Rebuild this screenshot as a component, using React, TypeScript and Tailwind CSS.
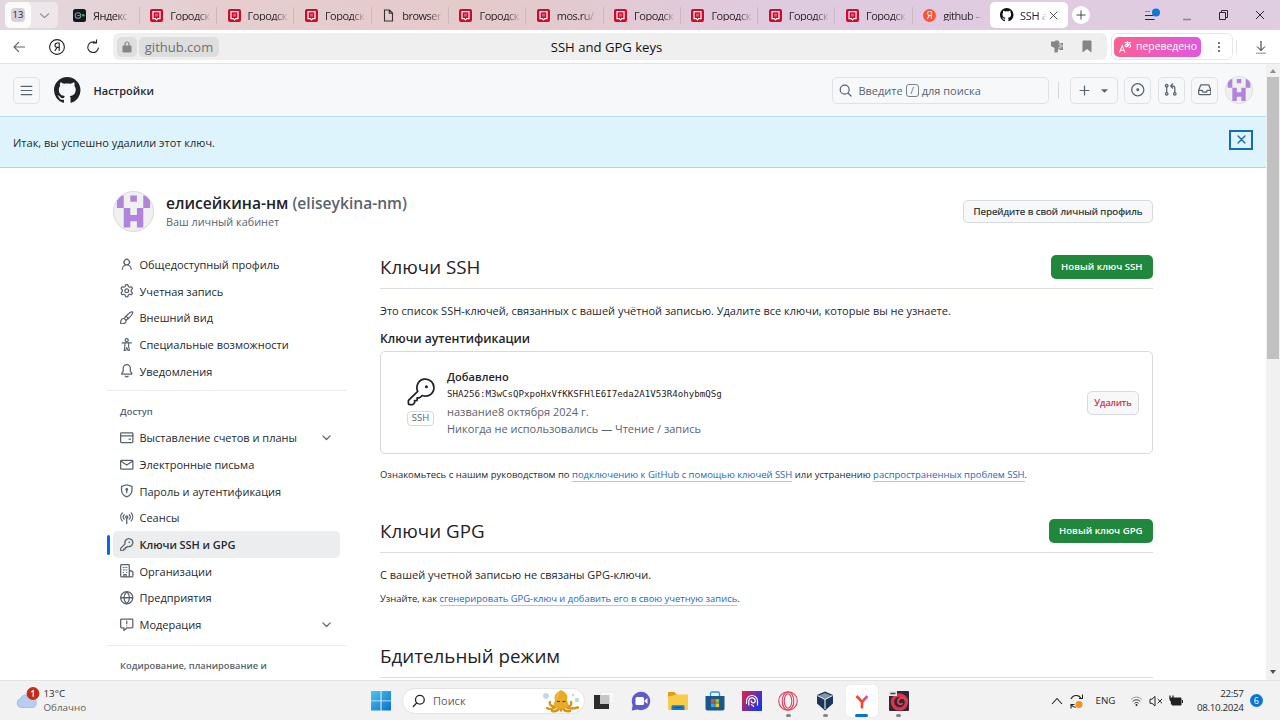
import type { ReactNode } from "react";

const PATHS = {
  github:
    "M8 0c4.42 0 8 3.58 8 8a8.013 8.013 0 0 1-5.45 7.59c-.4.08-.55-.17-.55-.38 0-.27.01-1.13.01-2.2 0-.75-.25-1.23-.54-1.48 1.78-.2 3.65-.88 3.65-3.95 0-.88-.31-1.59-.82-2.15.08-.2.36-1.02-.08-2.12 0 0-.67-.22-2.2.82-.64-.18-1.32-.27-2-.27-.68 0-1.36.09-2 .27-1.53-1.03-2.2-.82-2.2-.82-.44 1.1-.16 1.92-.08 2.12-.51.56-.82 1.28-.82 2.15 0 3.06 1.86 3.75 3.64 3.95-.23.2-.44.55-.51 1.07-.46.21-1.61.55-2.33-.66-.15-.24-.6-.83-1.23-.82-.67.01-.27.38.01.53.34.19.73.9.82 1.13.16.45.68 1.31 2.69.94 0 .67.01 1.3.01 1.49 0 .21-.15.45-.55.38A7.995 7.995 0 0 1 0 8c0-4.42 3.58-8 8-8Z",
  person:
    "M10.561 8.073a6.005 6.005 0 0 1 3.432 5.142.75.75 0 1 1-1.498.07 4.5 4.5 0 0 0-8.99 0 .75.75 0 0 1-1.498-.07 6.004 6.004 0 0 1 3.431-5.142 3.999 3.999 0 1 1 5.123 0ZM10.5 5a2.5 2.5 0 1 0-5 0 2.5 2.5 0 0 0 5 0Z",
  gear: "M8 0a8.2 8.2 0 0 1 .701.031C9.444.095 9.99.645 10.16 1.29l.288 1.107c.018.066.079.158.212.224.231.114.454.243.668.386.123.082.233.09.299.071l1.103-.303c.644-.176 1.392.021 1.82.63.27.385.506.792.704 1.218.315.675.111 1.422-.364 1.891l-.814.806c-.049.048-.098.147-.088.294.016.257.016.515 0 .772-.01.147.038.246.088.294l.814.806c.475.469.679 1.216.364 1.891a7.977 7.977 0 0 1-.704 1.217c-.428.61-1.176.807-1.82.63l-1.102-.302c-.067-.019-.177-.011-.3.071a5.909 5.909 0 0 1-.668.386c-.133.066-.194.158-.211.224l-.29 1.106c-.168.646-.715 1.196-1.458 1.26a8.006 8.006 0 0 1-1.402 0c-.743-.064-1.289-.614-1.458-1.26l-.289-1.106c-.018-.066-.079-.158-.212-.224a5.738 5.738 0 0 1-.668-.386c-.123-.082-.233-.09-.299-.071l-1.103.303c-.644.176-1.392-.021-1.82-.63a8.12 8.12 0 0 1-.704-1.218c-.315-.675-.111-1.422.363-1.891l.815-.806c.05-.048.098-.147.088-.294a6.214 6.214 0 0 1 0-.772c.01-.147-.038-.246-.088-.294l-.815-.806C.635 6.045.431 5.298.746 4.623a7.92 7.92 0 0 1 .704-1.217c.428-.61 1.176-.807 1.82-.63l1.102.302c.067.019.177.011.3-.071.214-.143.437-.272.668-.386.133-.066.194-.158.211-.224l.29-1.106C6.009.645 6.556.095 7.299.03 7.53.01 7.764 0 8 0Zm-.571 1.525c-.036.003-.108.036-.137.146l-.289 1.105c-.147.561-.549.967-.998 1.189-.173.086-.34.183-.5.29-.417.278-.97.423-1.529.27l-1.103-.303c-.109-.03-.175.016-.195.045-.22.312-.412.644-.573.99-.014.031-.021.11.059.19l.815.806c.411.406.562.957.53 1.456a4.709 4.709 0 0 0 0 .582c.032.499-.119 1.05-.53 1.456l-.815.806c-.081.08-.073.159-.059.19.162.346.353.677.573.989.02.03.085.076.195.046l1.102-.303c.56-.153 1.113-.008 1.53.27.161.107.328.204.501.29.447.222.85.629.997 1.189l.289 1.105c.029.109.101.143.137.146a6.6 6.6 0 0 0 1.142 0c.036-.003.108-.036.137-.146l.289-1.105c.147-.561.549-.967.998-1.189.173-.086.34-.183.5-.29.417-.278.97-.423 1.529-.27l1.103.303c.109.029.175-.016.195-.045.22-.313.411-.644.573-.99.014-.031.021-.11-.059-.19l-.815-.806c-.411-.406-.562-.957-.53-1.456a4.709 4.709 0 0 0 0-.582c-.032-.499.119-1.05.53-1.456l.815-.806c.081-.08.073-.159.059-.19a6.464 6.464 0 0 0-.573-.989c-.02-.03-.085-.076-.195-.046l-1.102.303c-.56.153-1.113.008-1.53-.27a4.44 4.44 0 0 0-.501-.29c-.447-.222-.85-.629-.997-1.189l-.289-1.105c-.029-.11-.101-.143-.137-.146a6.6 6.6 0 0 0-1.142 0ZM11 8a3 3 0 1 1-6 0 3 3 0 0 1 6 0ZM9.5 8a1.5 1.5 0 1 0-3.001.001A1.5 1.5 0 0 0 9.5 8Z",
  brush:
    "M11.134 1.535c.7-.509 1.416-.942 2.076-1.155.649-.21 1.463-.267 2.069.34.603.601.568 1.411.368 2.07-.202.668-.624 1.39-1.125 2.096-1.011 1.424-2.496 2.987-3.775 4.249-1.098 1.084-2.132 1.839-3.04 2.3a3.744 3.744 0 0 1-1.055 3.217c-.431.431-1.065.691-1.657.861-.614.177-1.294.287-1.914.357A21.151 21.151 0 0 1 .797 16a.75.75 0 0 1-.797-.797 21.25 21.25 0 0 1 .13-2.284c.067-.647.187-1.287.358-1.914.17-.591.43-1.226.86-1.657a3.746 3.746 0 0 1 3.227-1.054c.466-.893 1.225-1.907 2.314-2.982 1.271-1.255 2.833-2.75 4.246-3.777ZM1.62 13.089c-.051.464-.086.929-.104 1.395.466-.018.932-.053 1.396-.104a10.511 10.511 0 0 0 1.668-.309c.526-.151.856-.325 1.011-.48a2.25 2.25 0 1 0-3.182-3.182c-.155.155-.329.485-.48 1.01a10.515 10.515 0 0 0-.309 1.67Zm10.396-10.34c-1.224.89-2.605 2.189-3.822 3.384l1.718 1.718c1.21-1.205 2.51-2.597 3.387-3.833.47-.662.78-1.227.912-1.662.134-.444.032-.551.009-.575h-.001V1.78c-.014-.014-.113-.113-.548.027-.432.14-.995.462-1.655.942Zm-4.832 7.266-.001.001a9.859 9.859 0 0 0 1.63-1.142L7.155 7.216a9.7 9.7 0 0 0-1.161 1.607c.482.302.889.71 1.19 1.192Z",
  key: "M10.5 0a5.499 5.499 0 1 1-1.288 10.848l-.932.932a.749.749 0 0 1-.53.22H7v.75a.749.749 0 0 1-.22.53l-.5.5a.749.749 0 0 1-.53.22H5v.75a.749.749 0 0 1-.22.53l-.5.5a.749.749 0 0 1-.53.22h-2A1.75 1.75 0 0 1 0 14.25v-2c0-.199.079-.389.22-.53l4.932-4.932A5.5 5.5 0 0 1 10.5 0Zm-4 5.5c-.001.431.069.86.205 1.269a.75.75 0 0 1-.181.768L1.5 12.56v1.69c0 .138.112.25.25.25h1.69l.06-.06v-1.19a.75.75 0 0 1 .75-.75h1.19l.06-.06v-1.19a.75.75 0 0 1 .75-.75h1.19l1.023-1.025a.75.75 0 0 1 .768-.18A4 4 0 1 0 6.5 5.5ZM11 6a1 1 0 1 1 0-2 1 1 0 0 1 0 2Z",
};

function Solid({ name, className }: { name: keyof typeof PATHS; className: string }) {
  return (
    <svg viewBox="0 0 16 16" fill="currentColor" className={className}>
      <path d={PATHS[name]} />
    </svg>
  );
}

function Line({ children, className }: { children: ReactNode; className: string }) {
  return (
    <svg
      viewBox="0 0 16 16"
      fill="none"
      stroke="currentColor"
      strokeWidth="1.5"
      strokeLinecap="round"
      strokeLinejoin="round"
      className={className}
    >
      {children}
    </svg>
  );
}

const IC = "h-[13.5px] w-[13.5px] shrink-0 text-[#59636e]";

const accountNav = [
  { label: "Общедоступный профиль", icon: <Solid name="person" className={IC} /> },
  { label: "Учетная запись", icon: <Solid name="gear" className={IC} /> },
  { label: "Внешний вид", icon: <Solid name="brush" className={IC} /> },
  {
    label: "Специальные возможности",
    icon: (
      <Line className={IC}>
        <circle cx="8" cy="2.6" r="1.8" />
        <path d="M2.5 5.8h11M5.8 6v3.6L4.9 15h1.6L8 11.2 9.5 15h1.6l-.9-5.4V6" strokeWidth="1.3" />
      </Line>
    ),
  },
  {
    label: "Уведомления",
    icon: (
      <Line className={IC}>
        <path d="M3.8 5a4.2 4.2 0 0 1 8.4 0v2.9c0 .5.1.9.4 1.3l1.5 2.3c.1.3 0 .5-.3.5H2.2c-.3 0-.4-.2-.3-.5l1.5-2.3c.3-.4.4-.8.4-1.3z" />
        <path d="M6.4 14.5c.8.9 2.4.9 3.2 0" />
      </Line>
    ),
  },
];

const accessNav = [
  {
    label: "Выставление счетов и планы",
    chevron: true,
    icon: (
      <Line className={IC}>
        <rect x=".75" y="2.2" width="14.5" height="11.6" rx="1" />
        <path d="M1 5.9h14M10.8 9.7h1.6" />
      </Line>
    ),
  },
  {
    label: "Электронные письма",
    icon: (
      <Line className={IC}>
        <rect x=".75" y="2.7" width="14.5" height="10.6" rx="1" />
        <path d="m1.2 3.8 6.8 4.6 6.8-4.6" />
      </Line>
    ),
  },
  {
    label: "Пароль и аутентификация",
    icon: (
      <Line className={IC}>
        <path d="m8 .9 6.2 2V7c0 4.1-2.3 6.6-6.2 8.2C4.1 13.6 1.8 11.1 1.8 7V2.9z" />
        <circle cx="8" cy="6.4" r=".9" />
        <path d="M8 7v3.3" />
      </Line>
    ),
  },
  {
    label: "Сеансы",
    icon: (
      <Line className={IC}>
        <circle cx="8" cy="7" r="1.3" />
        <path d="M8 8.5V15M5 4.3a4 4 0 0 0 0 5.4M11 4.3a4 4 0 0 1 0 5.4M2.7 2.3a7.2 7.2 0 0 0 0 9.4M13.3 2.3a7.2 7.2 0 0 1 0 9.4" />
      </Line>
    ),
  },
  { label: "Ключи SSH и GPG", active: true, icon: <Solid name="key" className={IC} /> },
  {
    label: "Организации",
    icon: (
      <Line className={IC}>
        <path d="M11 15.2H1.8c-.6 0-1-.4-1-1V1.8c0-.6.4-1 1-1H10c.6 0 1 .4 1 1zM11 7.2l3.8 1.8c.3.2.5.4.5.7v4.5c0 .6-.4 1-1 1H11M4.6 15v-2.5h2.8V15" />
        <path d="M4 4h.01M6 4h.01M8 4h.01M4 7h.01M6 7h.01M8 7h.01M4 10h.01M8 10h.01" />
      </Line>
    ),
  },
  {
    label: "Предприятия",
    icon: (
      <Line className={IC}>
        <circle cx="8" cy="8" r="7.2" />
        <path d="M.9 8h14.2M8 .9c-4.3 4.1-4.3 10.1 0 14.2M8 .9c4.3 4.1 4.3 10.1 0 14.2" />
      </Line>
    ),
  },
  {
    label: "Модерация",
    chevron: true,
    icon: (
      <Line className={IC}>
        <path d="M1.8 1.2h12.4c.6 0 1 .4 1 1v8.6c0 .6-.4 1-1 1H8l-3.3 3v-3H1.8c-.6 0-1-.4-1-1V2.2c0-.6.4-1 1-1zM8 3.8v3M8 9.2h.01" />
      </Line>
    ),
  },
];

function NavItem({ label, icon, chevron, active }: { label: string; icon: ReactNode; chevron?: boolean; active?: boolean }) {
  return (
    <li className="flex h-[26.7px] items-center">
      <span className={active ? "h-[20px] w-[3px] rounded bg-[#0969da]" : "w-[3px]"} />
      <a
        className={
          active
            ? "ml-[3px] flex h-full w-[227px] items-center gap-[6px] rounded-[5px] bg-[#ecedef] pr-[6px] pl-[7px] font-semibold tracking-[-0.05px] text-[#25292e]"
            : "ml-[3px] flex h-full w-[227px] items-center gap-[6px] pr-[6px] pl-[7px] text-[#25292e]"
        }
      >
        {icon}
        <span className="flex-1 whitespace-nowrap">{label}</span>
        {chevron && (
          <Line className="mr-[1px] h-[13px] w-[13px] text-[#59636e]">
            <path d="m3.5 6 4.5 4.5L12.5 6" />
          </Line>
        )}
      </a>
    </li>
  );
}

function Avatar({ className }: { className: string }) {
  return (
    <svg viewBox="0 0 42 42" className={className}>
      <defs>
        <clipPath id="avatarCircle">
          <circle cx="21" cy="21" r="20.5" />
        </clipPath>
      </defs>
      <circle cx="21" cy="21" r="20.5" fill="#f0f0f0" />
      <g clipPath="url(#avatarCircle)" fill="#b083dc">
        <path d="M4 4.5h7v13H4zM17.7 4.5h6.8V11h-6.8zM31 4.5h7v13h-7zM11 17.5h6.7v7h6.8v-7H31v20h-6.5V31h-6.8v6.5H11z" />
      </g>
      <circle cx="21" cy="21" r="20.5" fill="none" stroke="#d5d8dc" />
    </svg>
  );
}

function MosIcon() {
  return (
    <svg viewBox="0 0 13 13" className="h-[13px] w-[13px] shrink-0">
      <rect width="13" height="13" rx="2" fill="#cc0b2c" />
      <path d="M3 2.6h7v7H7.7l-1.2 1.3-1.2-1.3H3z" fill="none" stroke="#fff" strokeWidth="1.2" />
      <path d="M5 4.6h3v3H5z" fill="#e0566d" />
    </svg>
  );
}

const mos = <MosIcon />;
const tabs: { title: string; icon: ReactNode }[] = [
  {
    title: "Яндекс",
    icon: (
      <svg viewBox="0 0 13 13" className="h-[13px] w-[13px] shrink-0">
        <rect width="13" height="13" rx="2.5" fill="#111820" />
        <circle cx="5" cy="6.5" r="2.8" fill="none" stroke="#8a929b" strokeWidth="1.1" />
        <path d="M4.3 6.5h2.5" stroke="#8a929b" />
        <circle cx="10.3" cy="6.3" r="1.3" fill="#19d035" />
      </svg>
    ),
  },
  { title: "Городск", icon: mos },
  { title: "Городск", icon: mos },
  { title: "Городск", icon: mos },
  {
    title: "browser",
    icon: (
      <svg viewBox="0 0 13 13" className="h-[13px] w-[13px] shrink-0" fill="none" stroke="#333" strokeWidth="1.1">
        <path d="M2.5 1h5l3 3v8h-8zM7.3 1v3.3h3.2" />
      </svg>
    ),
  },
  { title: "Городск", icon: mos },
  { title: "mos.ru/", icon: mos },
  { title: "Городск", icon: mos },
  { title: "Городск", icon: mos },
  { title: "Городск", icon: mos },
  { title: "Городск", icon: mos },
  {
    title: "github –",
    icon: (
      <span className="flex h-[13px] w-[13px] shrink-0 items-center justify-center rounded-full bg-[#fc5134] text-[10px] leading-none text-white">
        Я
      </span>
    ),
  },
];

function TabBar() {
  return (
    <div className="flex h-[30px] items-center bg-[linear-gradient(90deg,#e2d8e0_0%,#e6cecf_16%,#e5caca_38%,#e2cad6_50%,#dfcbe0_62%,#dfcde1_100%)] pl-[5px] text-[11px] text-[#2b2528]">
      <div className="flex h-[26px] w-[53px] items-center rounded-[5px] bg-white/40">
        <div className="flex h-full w-[26px] items-center justify-center rounded-[5px] bg-white/80">
          <span className="flex h-[14px] w-[14px] items-center justify-center rounded-[4px] bg-[#dcd0da] text-[9.5px]">13</span>
        </div>
        <Line className="ml-[7px] h-[13px] w-[13px] text-[#8a7f86]">
          <path d="m3 6 5 4.5L13 6" strokeWidth="1.3" />
        </Line>
      </div>
      <div className="ml-[4.5px] flex items-center">
        {tabs.map((t, i) => (
          <div key={i} className="flex h-[17px] w-[77.3px] items-center">
            <div className="flex flex-1 items-center gap-[7px] pl-[10.5px]">
              {t.icon}
              <span className="tracking-[-0.5px] whitespace-nowrap [mask-image:linear-gradient(90deg,#000_68%,rgba(0,0,0,0.15)_100%)]">{t.title}</span>
            </div>
            {i < 11 && <span className="h-[17px] w-px bg-[#cdb8c0]" />}
          </div>
        ))}
        <div className="flex h-[26px] w-[78px] items-center rounded-[5px] bg-white pr-[9px] pl-[10px]">
          <Solid name="github" className="h-[13.5px] w-[13.5px] shrink-0 text-[#111]" />
          <span className="ml-[6.5px] w-[28px] tracking-[-0.3px] whitespace-nowrap [mask-image:linear-gradient(90deg,#000_68%,transparent_95%)]">SSH a</span>
          <Line className="h-[11px] w-[11px] shrink-0 text-[#444]">
            <path d="m3 3 10 10M13 3 3 13" strokeWidth="1.3" />
          </Line>
        </div>
        <div className="ml-[4px] flex h-[18px] w-[18px] items-center justify-center rounded-full bg-white">
          <Line className="h-[12px] w-[12px] text-[#333]">
            <path d="M8 2.5v11M2.5 8h11" strokeWidth="1.2" />
          </Line>
        </div>
      </div>
      <svg viewBox="0 0 130 20" className="ml-[53px] h-[20px] w-[130px]" fill="none" stroke="#2d2830">
        <path d="M2 6.5h5" stroke="#8b8290" />
        <path d="M2 10.5h8M2 14.5h9.500" />
        <circle cx="13" cy="7.5" r="4" fill="#0d78d8" stroke="none" />
        <path d="M40 14.5h8" stroke="#8b8290" strokeWidth="1.5" />
        <path d="M76.5 7.5h6v7h-6zM78.5 7.5v-2h6v7h-2M113 6l8 8M121 6l-8 8" />
      </svg>
    </div>
  );
}

function Toolbar() {
  return (
    <div className="flex h-[34px] items-center border-b border-[#e3e3e5] bg-white">
      <svg viewBox="0 0 88 20" className="ml-[12px] h-[20px] w-[88px]" fill="none" stroke="#222" strokeWidth="1.1">
        <path d="M13 10H2M7 5l-5 5 5 5" stroke="#666" />
        <circle cx="45" cy="10" r="7.4" />
        <path d="M47.2 14V6h-1.8c-1.5 0-2.4.9-2.4 2.2s.9 2.2 2.3 2.2h1.9M45.1 10.4 42.8 14" />
        <path d="M83.7 5.600a5.300 5.300 0 1 0 2.700 5M84.500 2.500v3.500h-3.500" />
      </svg>
      <div className="ml-[13px] grid h-[27px] w-[994px] grid-cols-[1fr_auto_1fr] items-center rounded-[6px] bg-[#efefef] px-[4px]">
        <div className="flex gap-[2px]">
          <div className="flex h-[20px] w-[20px] items-center justify-center rounded-[5px] bg-[#dedede]">
            <svg viewBox="0 0 10 12" className="h-[12px] w-[10px]">
              <rect x=".5" y="4.5" width="9" height="7" rx="1" fill="#858585" />
              <path d="M3 5V3a2 2 0 0 1 4 0v2" fill="none" stroke="#858585" strokeWidth="1.2" />
            </svg>
          </div>
          <div className="flex h-[20px] w-[80px] items-center justify-center rounded-[5px] bg-[#dedede] pt-[2px] text-[13px] text-[#707070]">github.com</div>
        </div>
        <div className="mr-[7px] pt-[3px] text-[13.1px] text-[#111]">SSH and GPG keys</div>
        <div className="flex justify-end gap-[19px] pr-[11px]">
          <svg viewBox="0 0 12 13" className="h-[13px] w-[12px]" fill="#858585">
            <path d="M0 1.500h3.500L4.500.500h3l1 2.500H12v2.500H8.500v1H12v3.500H9L7.500 8.500 6.500 12.500H3.500V8L0 6z" />
            <path d="M7.500 4.200h3M7.500 7.800h3" stroke="#efefef" strokeWidth=".8" />
          </svg>
          <svg viewBox="0 0 10 13" className="h-[13px] w-[10px]" fill="#858585">
            <path d="M.5 1.500a1 1 0 0 1 1-1h7a1 1 0 0 1 1 1v11L5 9 .5 12.500z" />
          </svg>
        </div>
      </div>
      <div className="ml-[4px] flex h-[27px] w-[122px] items-center rounded-[6px] border border-[#e7e7e9] pl-[2px]">
        <div className="flex h-[20px] w-[87px] items-center gap-[4px] rounded-[5px] bg-[linear-gradient(90deg,#fb6090,#e257e0)] pl-[5px] text-[10.4px] text-white">
          <svg viewBox="0 0 14 14" className="h-[14px] w-[13px] shrink-0" fill="none" stroke="#fff" strokeWidth="1.1">
            <path d="m.5 13 3-7.500L6.500 13M1.500 10.500h4M6 2.500h7M9 .5v5.500c0 1-2.800 1-2.500-.5.3-1.800 6-2.300 6 .3 0 1-1 1.700-2 1.700M11.200 3.500c-.5 1.500-1.500 2.700-3 3.500" />
          </svg>
          <span className="whitespace-nowrap">переведено</span>
        </div>
        <svg viewBox="0 0 4 14" className="ml-[16px] h-[14px] w-[4px]" fill="#333">
          <circle cx="2" cy="3" r=".9" />
          <circle cx="2" cy="7" r=".9" />
          <circle cx="2" cy="11" r=".9" />
        </svg>
      </div>
      <span className="ml-[3px] h-[14px] w-px bg-[#e5e5e5]" />
      <svg viewBox="0 0 12 14" className="ml-[18px] h-[14px] w-[12px]" fill="none" stroke="#222">
        <path d="M6 1v9.500M2 6.500l4 4 4-4" />
        <path d="M1 13.200h10" stroke="#888" />
      </svg>
    </div>
  );
}

const SQUARE = "flex h-[27px] w-[27px] items-center justify-center rounded-[5px] border border-[#dfe3e7] text-[#59636e]";

function SiteHeader() {
  return (
    <header className="flex h-[53px] items-center border-b border-[#b5dcec] bg-[#f6f8fa] pl-[13px]">
      <div className={SQUARE}>
        <Line className="h-[13px] w-[13px]">
          <path d="M1.500 3h13M1.500 8h13M1.500 13h13" />
        </Line>
      </div>
      <Solid name="github" className="ml-[14px] h-[26.5px] w-[26.5px] text-[#1f2328]" />
      <span className="ml-[13px] flex-1 pt-[1px] text-[11px] font-semibold text-[#25292e]">Настройки</span>
      <div className="mr-[-1px] flex h-[27px] w-[217px] items-center rounded-[5px] border border-[#dfe3e7] pt-[1px] pl-[6px] text-[11px] text-[#59636e]">
        <Line className="mr-[6.5px] h-[13px] w-[13px]">
          <circle cx="7" cy="7" r="5.5" />
          <path d="m11.200 11.200 3.600 3.600" />
        </Line>
        Введите
        <span className="mx-[3px] flex h-[13px] w-[13px] items-center justify-center rounded-[3px] border border-[#7a828b] text-[9px]">/</span>
        для поиска
      </div>
      <span className="ml-[10.5px] h-[17px] w-px bg-[#d4d9de]" />
      <div className="ml-[10.5px] flex h-[27px] w-[48px] items-center justify-center gap-[10px] rounded-[5px] border border-[#dfe3e7] pr-[2px] text-[#59636e]">
        <Line className="h-[13px] w-[13px]">
          <path d="M8 2.500v11M2.500 8h11" />
        </Line>
        <svg viewBox="0 0 8 4" className="mt-[2px] h-[4px] w-[7px]" fill="currentColor">
          <path d="M0 0h8L4 4z" />
        </svg>
      </div>
      <div className="ml-[6.5px] flex gap-[6.3px]">
        <div className={SQUARE}>
          <Line className="h-[13.5px] w-[13.5px]">
            <circle cx="8" cy="8" r="7.2" />
            <circle cx="8" cy="8" r="1" fill="currentColor" />
          </Line>
        </div>
        <div className={SQUARE}>
          <Line className="h-[13.5px] w-[13.5px]">
            <circle cx="3.2" cy="3.2" r="1.5" />
            <circle cx="3.2" cy="12.8" r="1.5" />
            <circle cx="12.8" cy="12.8" r="1.5" />
            <path d="M3.200 5v6M12.800 11V5.500c0-1-.8-1.900-1.900-1.900H8.500M10.200 1.200 7.900 3.600l2.300 2.300" />
          </Line>
        </div>
        <div className={SQUARE}>
          <Line className="h-[13.5px] w-[13.5px]">
            <path d="M3.900 2.200h8.200c.4 0 .7.200.9.600l2.200 5.700v4c0 .7-.4 1.200-1.200 1.200H2c-.8 0-1.200-.5-1.200-1.200v-4L3 2.800c.2-.4.500-.6.900-.6zM1 8.800h3.800l1.200 2h4l1.200-2H15" />
          </Line>
        </div>
      </div>
      <Avatar className="mr-[13px] ml-[7px] h-[28px] w-[28px]" />
    </header>
  );
}

function Sidebar() {
  return (
    <nav className="w-[240px] shrink-0 text-[11px]">
      <ul>
        {accountNav.map((n) => (
          <NavItem key={n.label} {...n} />
        ))}
      </ul>
      <div className="mt-[6px] h-px bg-[#e9ecef]" />
      <h3 className="mt-[11px] mb-[3px] h-[19px] pl-[13px] text-[9.3px] leading-[19px] font-semibold text-[#59636e]">Доступ</h3>
      <ul>
        {accessNav.map((n) => (
          <NavItem key={n.label} {...n} />
        ))}
      </ul>
      <div className="mt-[7px] h-px bg-[#e9ecef]" />
      <h3 className="mt-[10px] h-[19px] pl-[13px] text-[9.3px] leading-[19px] font-semibold text-[#59636e]">Кодирование, планирование и</h3>
    </nav>
  );
}

function Link({ children }: { children: ReactNode }) {
  return <a className="border-b border-[#a9c8ef] text-[#2468b8]">{children}</a>;
}

function SectionHead({ title, action }: { title: string; action?: string }) {
  return (
    <div className="flex h-[44px] items-center justify-between border-b border-[#d9dfe4]">
      <h2 className="text-[18.8px] leading-[26px] text-[#1f2328]">{title}</h2>
      {action && (
        <button className="flex h-[24px] items-center rounded-[5px] bg-[#1f883d] px-[10.5px] text-[9.6px] font-semibold whitespace-nowrap text-white">{action}</button>
      )}
    </div>
  );
}

function Content() {
  return (
    <main className="mt-[-6px] ml-[33px] w-[773px] text-[11px] text-[#25292e]">
      <SectionHead title="Ключи SSH" action="Новый ключ SSH" />
      <p className="mt-[12px] h-[19px] leading-[19px] whitespace-nowrap">
        Это список SSH-ключей, связанных с вашей учётной записью. Удалите все ключи, которые вы не узнаете.
      </p>
      <h3 className="mt-[9px] h-[20px] text-[12.2px] leading-[20px] font-semibold text-[#1f2328]">Ключи аутентификации</h3>
      <section className="mt-[2px] flex h-[103px] items-center rounded-[5px] border border-[#d5dade] pr-[13px] pl-[26px]">
        <div className="flex w-[27px] flex-col items-center pb-[2px]">
          <svg viewBox="0 0 24 24" className="h-[28px] w-[28px] text-[#1f2328]" fill="none" stroke="currentColor" strokeWidth="1.5" strokeLinejoin="round">
            <path d="M9.200 11.400A7.300 7.300 0 1 1 13 15l-1.700 1.700c-.3.300-.6.400-1 .4H8.700v1.700c0 .3-.2.500-.5.500H6.500V21c0 .3-.1.500-.4.700l-.8.800c-.2.200-.5.300-.8.300H2.200c-.5 0-1-.5-1-1v-2c0-.3.100-.6.300-.8z" />
            <circle cx="16.6" cy="7.500" r="1.3" fill="currentColor" stroke="none" />
          </svg>
          <span className="mt-[5px] flex h-[15px] w-[27px] items-center justify-center rounded-[4px] border border-[#d5dade] text-[9.5px] text-[#59636e]">SSH</span>
        </div>
        <div className="ml-[13px] flex-1 leading-[17.5px] whitespace-nowrap text-[#59636e]">
          <p className="text-[11.1px] font-semibold text-[#1f2328]">Добавлено</p>
          <p className="pt-[1px] font-['DejaVu_Sans_Mono',monospace] text-[9.15px] leading-[16.5px] text-[#1f2328]">SHA256:M3wCsQPxpoHxVfKKSFHlE6I7eda2A1V53R4ohybmQSg</p>
          <p>название8 октября 2024 г.</p>
          <p>Никогда не использовались — Чтение / запись</p>
        </div>
        <button className="flex h-[24px] w-[52px] items-center justify-center rounded-[5px] border border-[#d5dade] bg-[#f6f8fa] text-[9.3px] text-[#cf222e] [-webkit-text-stroke:0.2px]">Удалить</button>
      </section>
      <p className="mt-[12px] h-[18px] text-[9.48px] leading-[18px] whitespace-nowrap">
        Ознакомьтесь с нашим руководством по <Link>подключению к GitHub с помощью ключей SSH</Link> или устранению <Link>распространенных проблем SSH</Link>.
      </p>
      <div className="mt-[25px]">
        <SectionHead title="Ключи GPG" action="Новый ключ GPG" />
      </div>
      <p className="mt-[12px] h-[19px] leading-[19px]">С вашей учетной записью не связаны GPG-ключи.</p>
      <p className="mt-[6px] h-[18px] text-[9.42px] leading-[18px]">
        Узнайте, как <Link>сгенерировать GPG-ключ и добавить его в свою учетную запись</Link>.
      </p>
      <div className="mt-[26px]">
        <SectionHead title="Бдительный режим" />
      </div>
    </main>
  );
}

function Page() {
  return (
    <div className="flex h-[616px] overflow-hidden bg-white">
      <div className="h-full w-[1266px] overflow-hidden">
        <SiteHeader />
        <div className="flex h-[51px] items-center border-b border-[#a6d8e8] bg-[#ddf4fd] pr-[13px] pl-[13px] text-[11px] text-[#25292e]">
          <span className="flex-1 pt-[1px]">Итак, вы успешно удалили этот ключ.</span>
          <button className="mb-[5px] flex h-[20px] w-[24px] items-center justify-center border-2 border-[#1769b9] text-[#1769b9]">
            <Line className="h-[11px] w-[11px]">
              <path d="m3 3 10 10M13 3 3 13" strokeWidth="2" />
            </Line>
          </button>
        </div>
        <div className="ml-[113px] flex h-[83px] w-[1040px] items-center pt-[4px]">
          <Avatar className="h-[41px] w-[41px]" />
          <div className="ml-[12px] flex-1">
            <h1 className="text-[15.6px] leading-[20px] font-semibold text-[#1f2328]">
              елисейкина-нм <span className="text-[#59636e]">(eliseykina-nm)</span>
            </h1>
            <p className="text-[10.85px] leading-[17px] text-[#59636e]">Ваш личный кабинет</p>
          </div>
          <button className="flex h-[23px] w-[190px] items-center justify-center rounded-[5px] border border-[#d5dade] bg-[#f6f8fa] text-[9.7px] whitespace-nowrap text-[#25292e] [-webkit-text-stroke:0.2px]">
            Перейдите в свой личный профиль
          </button>
        </div>
        <div className="ml-[107px] flex">
          <Sidebar />
          <Content />
        </div>
      </div>
      <div className="flex w-[14px] flex-col items-center bg-[#f1f1f1] py-[5px]">
        <svg viewBox="0 0 6 4" className="h-[4px] w-[6px]" fill="#8c8c8c">
          <path d="m0 4 3-4 3 4z" />
        </svg>
        <div className="mt-[4px] h-[282px] w-[12px] bg-[#c1c1c1]" />
        <span className="flex-1" />
        <svg viewBox="0 0 6 4" className="mb-[1px] h-[4px] w-[6px]" fill="#505050">
          <path d="m0 0 3 4 3-4z" />
        </svg>
      </div>
    </div>
  );
}

function Octopus() {
  return (
    <svg viewBox="0 0 38 24" className="h-[24px] w-[38px]">
      <circle cx="4" cy="7" r="3" fill="#bcdcea" />
      <circle cx="35" cy="11" r="2.3" fill="#bcdcea" />
      <circle cx="31" cy="6" r="1.3" fill="#bcdcea" />
      <g fill="none" stroke="#d99416" strokeWidth="2.4" strokeLinecap="round">
        <path d="M13 17c-2 1-6-.5-5-4M14 18c-3 2-7 2.500-9 1M17 19c-1 3-4 3.500-7 3M19 19v2.500M21 19c1 3 4 3.500 7 3M24 18c3 2.500 8 1.500 12 .5M25 17c3 1 5-1 4-4" />
      </g>
      <path d="M19 1c6 3 7.500 6 6 10l1.500 5c-1 5-14 5-15 0l1.500-5C11.500 7 13.500 4 19 1z" fill="#e8ab28" />
      <path d="M17 4c-2 2-2.500 4-2 6" fill="none" stroke="#f7cf62" />
      <path d="M15 12.500h3M20.500 12.500h3" stroke="#5a3a10" />
    </svg>
  );
}

const apps: { icon: ReactNode; state?: "open" | "focus" }[] = [
  {
    icon: (
      <>
        <rect x="6.5" y="1" width="13.5" height="11" rx="1" fill="#fafafa" stroke="#ddd" strokeWidth=".5" />
        <path d="M0 4h6v9h9v5H0z" fill="#2c2c2c" />
        <rect x="6" y="4" width="9.5" height="9" fill="#c6c6c6" />
      </>
    ),
  },
  {
    icon: (
      <>
        <path d="M10 .8a9.200 9.200 0 1 1-3.500 17.700L.8 19.400l.8-5.500A9.200 9.200 0 0 1 10 .8z" fill="#605bc9" />
        <rect x="4.5" y="6" width="8.5" height="8" rx="1.5" fill="#fff" />
        <path d="m13.500 9.500 3-2.500v6l-3-2.500z" fill="#fff" />
      </>
    ),
  },
  {
    icon: (
      <>
        <path d="M0 2c0-.6.400-1 1-1h5.500l2 2.500V6H0z" fill="#dd9c1c" />
        <path d="M0 5.500 9 3.500h10c.6 0 1 .4 1 1V18c0 .6-.4 1-1 1H1c-.6 0-1-.4-1-1z" fill="#fbcb45" />
        <path d="M3.500 19v-3.500c0-.8.500-1.300 1.300-1.300h10.400c.8 0 1.300.5 1.300 1.300V19z" fill="#1779c8" />
        <path d="M6.500 16.500h7" stroke="#0c5596" />
      </>
    ),
  },
  {
    icon: (
      <>
        <path d="M5.500 5V2.500C5.500 1.500 6 1 7 1h6c1 0 1.500.5 1.500 1.500V5" fill="none" stroke="#1b9ade" strokeWidth="1.3" />
        <path d="M.5 5h19v12.500c0 1.200-.8 2-2 2h-15c-1.200 0-2-.8-2-2z" fill="#19578c" />
        <path d="M6 8h3.700v3.700H6z" fill="#f25022" />
        <path d="M10.400 8h3.700v3.700h-3.700z" fill="#8cc63c" />
        <path d="M6 12.400h3.700v3.700H6z" fill="#20b1ee" />
        <path d="M10.400 12.400h3.700v3.700h-3.700z" fill="#ffc21a" />
      </>
    ),
  },
  {
    icon: (
      <>
        <defs>
          <linearGradient id="print" x1="0" y1="0" x2="1" y2="0.6">
            <stop offset="0" stopColor="#e42542" />
            <stop offset=".5" stopColor="#7f2d98" />
            <stop offset="1" stopColor="#1a37e5" />
          </linearGradient>
        </defs>
        <rect width="20" height="20" fill="url(#print)" />
        <path d="M4.500 13V10a5.500 5.500 0 1 1 11 0v4.500M6.800 14.500V10a3.200 3.200 0 0 1 6.400 0c0 2.500-4 2.500-4 0v-.5M9 13.500c1.500.3 2.500 1 2.800 2.500" fill="none" stroke="#fff" strokeWidth="1.2" />
      </>
    ),
  },
  {
    state: "open",
    icon: (
      <g fill="none" stroke="#e13c58" strokeWidth="1.1">
        <circle cx="10" cy="10" r="9.3" />
        <ellipse cx="10" cy="10" rx="5.8" ry="9" />
        <ellipse cx="10" cy="10" rx="3.8" ry="7.2" />
      </g>
    ),
  },
  {
    state: "open",
    icon: (
      <>
        <path d="m10 .5 8 3.500v8.500L10 19.500l-8-7V4z" fill="#1b3758" />
        <path d="m10 2 6 2.500-6 3-6-3z" fill="#7e95b2" />
        <path d="m2.500 4.500 7.500 3.800 7.500-3.800M10 8.300V18" fill="none" stroke="#dce5f0" strokeWidth="1.2" />
      </>
    ),
  },
  {
    state: "focus",
    icon: (
      <>
        <defs>
          <linearGradient id="yBrowser" x1="0" y1="1" x2="1" y2="0">
            <stop offset=".55" stopColor="#f5452b" />
            <stop offset="1" stopColor="#e24bd8" />
          </linearGradient>
        </defs>
        <path d="m4.500 5 5.500 6 5.500-6M10 10.800v6.700" fill="none" stroke="url(#yBrowser)" strokeWidth="2.6" />
      </>
    ),
  },
  {
    state: "open",
    icon: (
      <>
        <rect width="20" height="20" rx="1" fill="#30282e" />
        <circle cx="10.5" cy="11" r="7" fill="none" stroke="#d9354f" strokeWidth="3.4" />
        <path d="M17 10c-1-4.500-7-4.500-8 0-.6 3 3.500 4.500 4.500 2" fill="none" stroke="#e0405a" strokeWidth="2" />
        <rect width="8" height="5" fill="#e5e5e5" />
        <path d="M1.500 2.500h5" stroke="#444" strokeWidth="1.5" />
      </>
    ),
  },
];

function Taskbar() {
  return (
    <div className="flex h-[40px] items-center border-t border-[#e3e3e3] bg-[#f2f2f2] text-[9.8px] text-[#2a2a2a]">
      <div className="flex w-[371px] items-center pl-[16px]">
        <svg viewBox="0 0 24 24" className="mb-[5px] h-[24px] w-[24px]">
          <path d="M5 21.500a4.500 4.500 0 0 1-.5-8.800C6 8.300 13 7.500 14.800 12.500c4-.5 6 2 5.500 5-.3 2.500-2 4-4.300 4z" fill="#b9cdf2" stroke="#91ade2" strokeWidth=".7" />
          <circle cx="17" cy="7.5" r="6.4" fill="#c42b1c" />
          <path d="m15.200 6 2-1.300v6" stroke="#fff" strokeWidth="1.2" fill="none" />
        </svg>
        <div className="ml-[3.5px] leading-[13.5px]">
          <p>13°C</p>
          <p className="text-[#606060]">Облачно</p>
        </div>
      </div>
      <svg viewBox="0 0 20 20" className="h-[20px] w-[20px]">
        <defs>
          <linearGradient id="win" x1="0" y1="0" x2="1" y2="1">
            <stop offset="0" stopColor="#4cc5f1" />
            <stop offset="1" stopColor="#0870cb" />
          </linearGradient>
        </defs>
        <path d="M0 0h9.500v9.500H0zM10.500 0H20v9.500h-9.500zM0 10.300h9.500v9.200H0zM10.500 10.300H20v9.200h-9.500z" fill="url(#win)" />
      </svg>
      <div className="ml-[11px] flex h-[26px] w-[183px] items-center rounded-full border border-[#e4e4e4] bg-white pr-[4px] pl-[9px]">
        <Line className="h-[14px] w-[14px] text-[#222]">
          <circle cx="9" cy="6.5" r="5" />
          <path d="M5.400 10.100 1.500 14.300" />
        </Line>
        <span className="ml-[7px] flex-1 text-[11px] text-[#5c5c5c]">Поиск</span>
        <Octopus />
      </div>
      <div className="ml-px flex">
        {apps.map((a, i) => (
          <div key={i} className="flex h-[38px] w-[36.8px] flex-col items-center">
            <div
              className={
                a.state === "focus"
                  ? "mt-[3px] flex h-[32px] w-[32px] flex-col items-center rounded-[4px] bg-white pt-[6px] shadow-[0_0_1px_#ccc]"
                  : "mt-[3px] flex h-[32px] w-[32px] flex-col items-center pt-[6px]"
              }
            >
              <svg viewBox="0 0 20 20" className="h-[20px] w-[20px] shrink-0">
                {a.icon}
              </svg>
              {a.state === "open" && <span className="mt-[3px] h-[3px] w-[5px] shrink-0 rounded-full bg-[#858585]" />}
              {a.state === "focus" && <span className="mt-[3px] h-[3px] w-[13px] shrink-0 rounded-full bg-[#0872c9]" />}
            </div>
          </div>
        ))}
      </div>
      <div className="flex flex-1 items-center justify-end pr-[17px]">
        <svg viewBox="0 0 34 18" className="h-[18px] w-[34px]" fill="none" stroke="#222" strokeWidth="1.1">
          <path d="m3 12 5-5.500 5 5.500M22 7c2-4.500 8-4.800 10-.5M33.500 2.500v4H30M22 16.500v-4h3.500M22.300 12.700c1 1.700 2.500 2.500 4.500 2.500" />
          <circle cx="30" cy="12.5" r="3.5" fill="#f7931a" stroke="none" />
        </svg>
        <span className="ml-[13px]">ENG</span>
        <svg viewBox="0 0 54 14" className="ml-[14px] h-[14px] w-[54px]" fill="none" stroke="#222">
          <path d="M1 5.500c3-3.200 8-3.200 11 0" stroke="#999" />
          <path d="M2.700 7.500c2.200-2.200 5.500-2.200 7.600 0M4.500 9.300c1.100-1.100 3-1.100 4 0" />
          <circle cx="6.5" cy="11" r="1" fill="#222" stroke="none" />
          <path d="M20 5.200h2l3-2.700v9.500l-3-2.700h-2zM27.700 5l4.300 4.300M32 5l-4.300 4.300" />
          <path d="M43.500 4h7.500v7h-9V7M52.500 6v3" fill="#222" />
          <path d="M40 1.500v3M43 1.500v3M41.500 6v4" strokeWidth="1.3" />
          <path d="M39.500 3.500h4.300v2a2 2 0 0 1-4.300 0z" fill="#222" stroke="none" />
        </svg>
        <div className="ml-[13px] w-[47px] text-right leading-[13.3px] tracking-[-0.35px] whitespace-nowrap">
          <p>22:57</p>
          <p>08.10.2024</p>
        </div>
        <span className="ml-[6px] flex h-[13.5px] w-[13.5px] items-center justify-center rounded-full bg-[#0b76d2] text-[9px] text-white">6</span>
      </div>
    </div>
  );
}

export default function App() {
  return (
    <div className="h-[720px] w-[1280px] overflow-hidden bg-white font-['Open_Sans','Noto_Sans',sans-serif] leading-none">
      <TabBar />
      <Toolbar />
      <Page />
      <Taskbar />
    </div>
  );
}
